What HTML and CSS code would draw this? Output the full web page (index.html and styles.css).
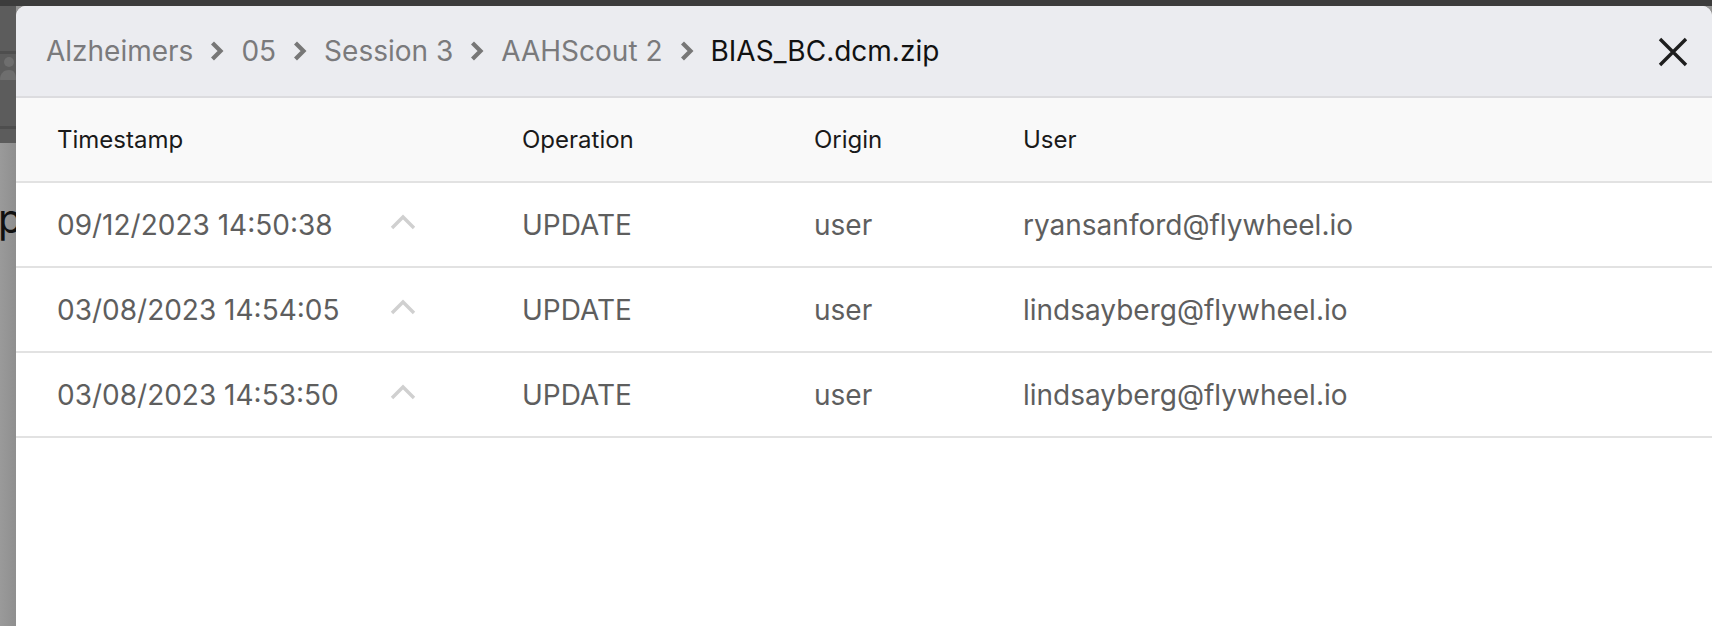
FILE: index.html
```html
<!DOCTYPE html>
<html lang="en">
<head>
<meta charset="utf-8">
<title>File history</title>
<link rel="stylesheet" href="styles.css">
</head>
<body>
<div class="topbar"></div>
<div class="main">
  <div class="behind">
    <div class="behind-dark">
      <div class="behind-line"></div>
      <svg class="behind-person" width="16" height="30" viewBox="0 0 16 30"><circle cx="9" cy="8" r="5" fill="#6e6e6e"/><path d="M0 26 C0 19 4 16 9 16 C14 16 16 19 16 26 Z" fill="#6e6e6e"/></svg>
      <div class="behind-line low"></div>
    </div>
    <div class="behind-light">
      <span class="behind-text">p</span>
    </div>
  </div>
  <div class="modal">
    <div class="modal-header">
      <nav class="crumbs">
        <span class="crumb">Alzheimers</span>
        <svg class="sep" width="16" height="22" viewBox="0 0 16 22"><path d="M3.5 3 L11.5 11 L3.5 19" fill="none" stroke="#777" stroke-width="4.2"/></svg>
        <span class="crumb">05</span>
        <svg class="sep" width="16" height="22" viewBox="0 0 16 22"><path d="M3.5 3 L11.5 11 L3.5 19" fill="none" stroke="#777" stroke-width="4.2"/></svg>
        <span class="crumb">Session 3</span>
        <svg class="sep" width="16" height="22" viewBox="0 0 16 22"><path d="M3.5 3 L11.5 11 L3.5 19" fill="none" stroke="#777" stroke-width="4.2"/></svg>
        <span class="crumb">AAHScout 2</span>
        <svg class="sep" width="16" height="22" viewBox="0 0 16 22"><path d="M3.5 3 L11.5 11 L3.5 19" fill="none" stroke="#777" stroke-width="4.2"/></svg>
        <span class="crumb current">BIAS_BC.dcm.zip</span>
      </nav>
      <svg class="close" width="30" height="30" viewBox="0 0 30 30"><path d="M2 2 L28 28 M28 2 L2 28" stroke="#1e1e1e" stroke-width="3.4" fill="none"/></svg>
    </div>
    <div class="table">
      <div class="row head">
        <div class="cell c-time">Timestamp</div>
        <div class="cell c-op">Operation</div>
        <div class="cell c-origin">Origin</div>
        <div class="cell c-user">User</div>
      </div>
      <div class="row">
        <div class="cell c-time"><span class="ts">09/12/2023 14:50:38</span><svg class="expand" width="26" height="16" viewBox="0 0 26 16"><path d="M2 14 L13 3 L24 14" fill="none" stroke="#d0d0d0" stroke-width="3.4"/></svg></div>
        <div class="cell c-op">UPDATE</div>
        <div class="cell c-origin">user</div>
        <div class="cell c-user">ryansanford@flywheel.io</div>
      </div>
      <div class="row">
        <div class="cell c-time"><span class="ts">03/08/2023 14:54:05</span><svg class="expand" width="26" height="16" viewBox="0 0 26 16"><path d="M2 14 L13 3 L24 14" fill="none" stroke="#d0d0d0" stroke-width="3.4"/></svg></div>
        <div class="cell c-op">UPDATE</div>
        <div class="cell c-origin">user</div>
        <div class="cell c-user">lindsayberg@flywheel.io</div>
      </div>
      <div class="row">
        <div class="cell c-time"><span class="ts">03/08/2023 14:53:50</span><svg class="expand" width="26" height="16" viewBox="0 0 26 16"><path d="M2 14 L13 3 L24 14" fill="none" stroke="#d0d0d0" stroke-width="3.4"/></svg></div>
        <div class="cell c-op">UPDATE</div>
        <div class="cell c-origin">user</div>
        <div class="cell c-user">lindsayberg@flywheel.io</div>
      </div>
    </div>
  </div>
</div>
</body>
</html>
```
FILE: styles.css
```css
* { box-sizing: border-box; }
html, body {
  margin: 0;
  padding: 0;
  height: 100%;
  overflow: hidden;
  background: #959595;
  font-family: Inter, "Noto Sans", "Liberation Sans", sans-serif;
}
.topbar {
  height: 6px;
  background: #3c3c3c;
}
.main {
  display: flex;
  height: 620px;
}
.behind {
  width: 16px;
  flex: none;
  display: flex;
  flex-direction: column;
  overflow: hidden;
}
.behind-dark {
  height: 137px;
  background: #5c5c5c;
  display: flex;
  flex-direction: column;
  padding-top: 45px;
}
.behind-line {
  height: 3px;
  background: #4e4e4e;
  margin-bottom: 2px;
}
.behind-line.low {
  margin-top: 42px;
}
.behind-person {
  display: block;
  margin-top: -2px;
}
.behind-light {
  flex: 1;
  background: linear-gradient(to right, #9a9a9a, #8f8f8f);
  padding-top: 56px;
}
.behind-text {
  display: block;
  font-size: 40px;
  line-height: 40px;
  color: #111;
  margin-left: -2px;
}
.modal {
  flex: 1;
  background: #ffffff;
  border-radius: 10px 10px 0 0;
  overflow: hidden;
  display: flex;
  flex-direction: column;
}
.modal-header {
  height: 92px;
  flex: none;
  background: #ebecf0;
  border-bottom: 2px solid #dcdcdf;
  display: flex;
  align-items: center;
  justify-content: space-between;
  padding: 0 24px 0 30px;
}
.crumbs {
  display: flex;
  align-items: center;
  gap: 16px;
  padding-bottom: 0;
}
.crumb {
  font-size: 28px;
  color: #7a7a7c;
}
.crumb.current {
  color: #111111;
}
.sep {
  display: block;
}
.close {
  display: block;
  margin-top: 2px;
}
.table {
  display: flex;
  flex-direction: column;
}
.row {
  display: grid;
  grid-template-columns: 465px 292px 209px 1fr;
  align-items: center;
  height: 85px;
  padding-left: 41px;
  border-bottom: 2px solid #e2e2e2;
  background: #ffffff;
}
.row.head {
  height: 85px;
  background: #f9f9f9;
}
.cell {
  font-size: 28px;
  color: #5e5e5e;
  white-space: nowrap;
}
.row.head .cell {
  font-size: 24px;
  color: #1a1a1a;
}
.c-time {
  display: flex;
  align-items: center;
}
.ts {
  width: 333px;
}
.expand {
  display: block;
  margin-top: -6px;
}
```
